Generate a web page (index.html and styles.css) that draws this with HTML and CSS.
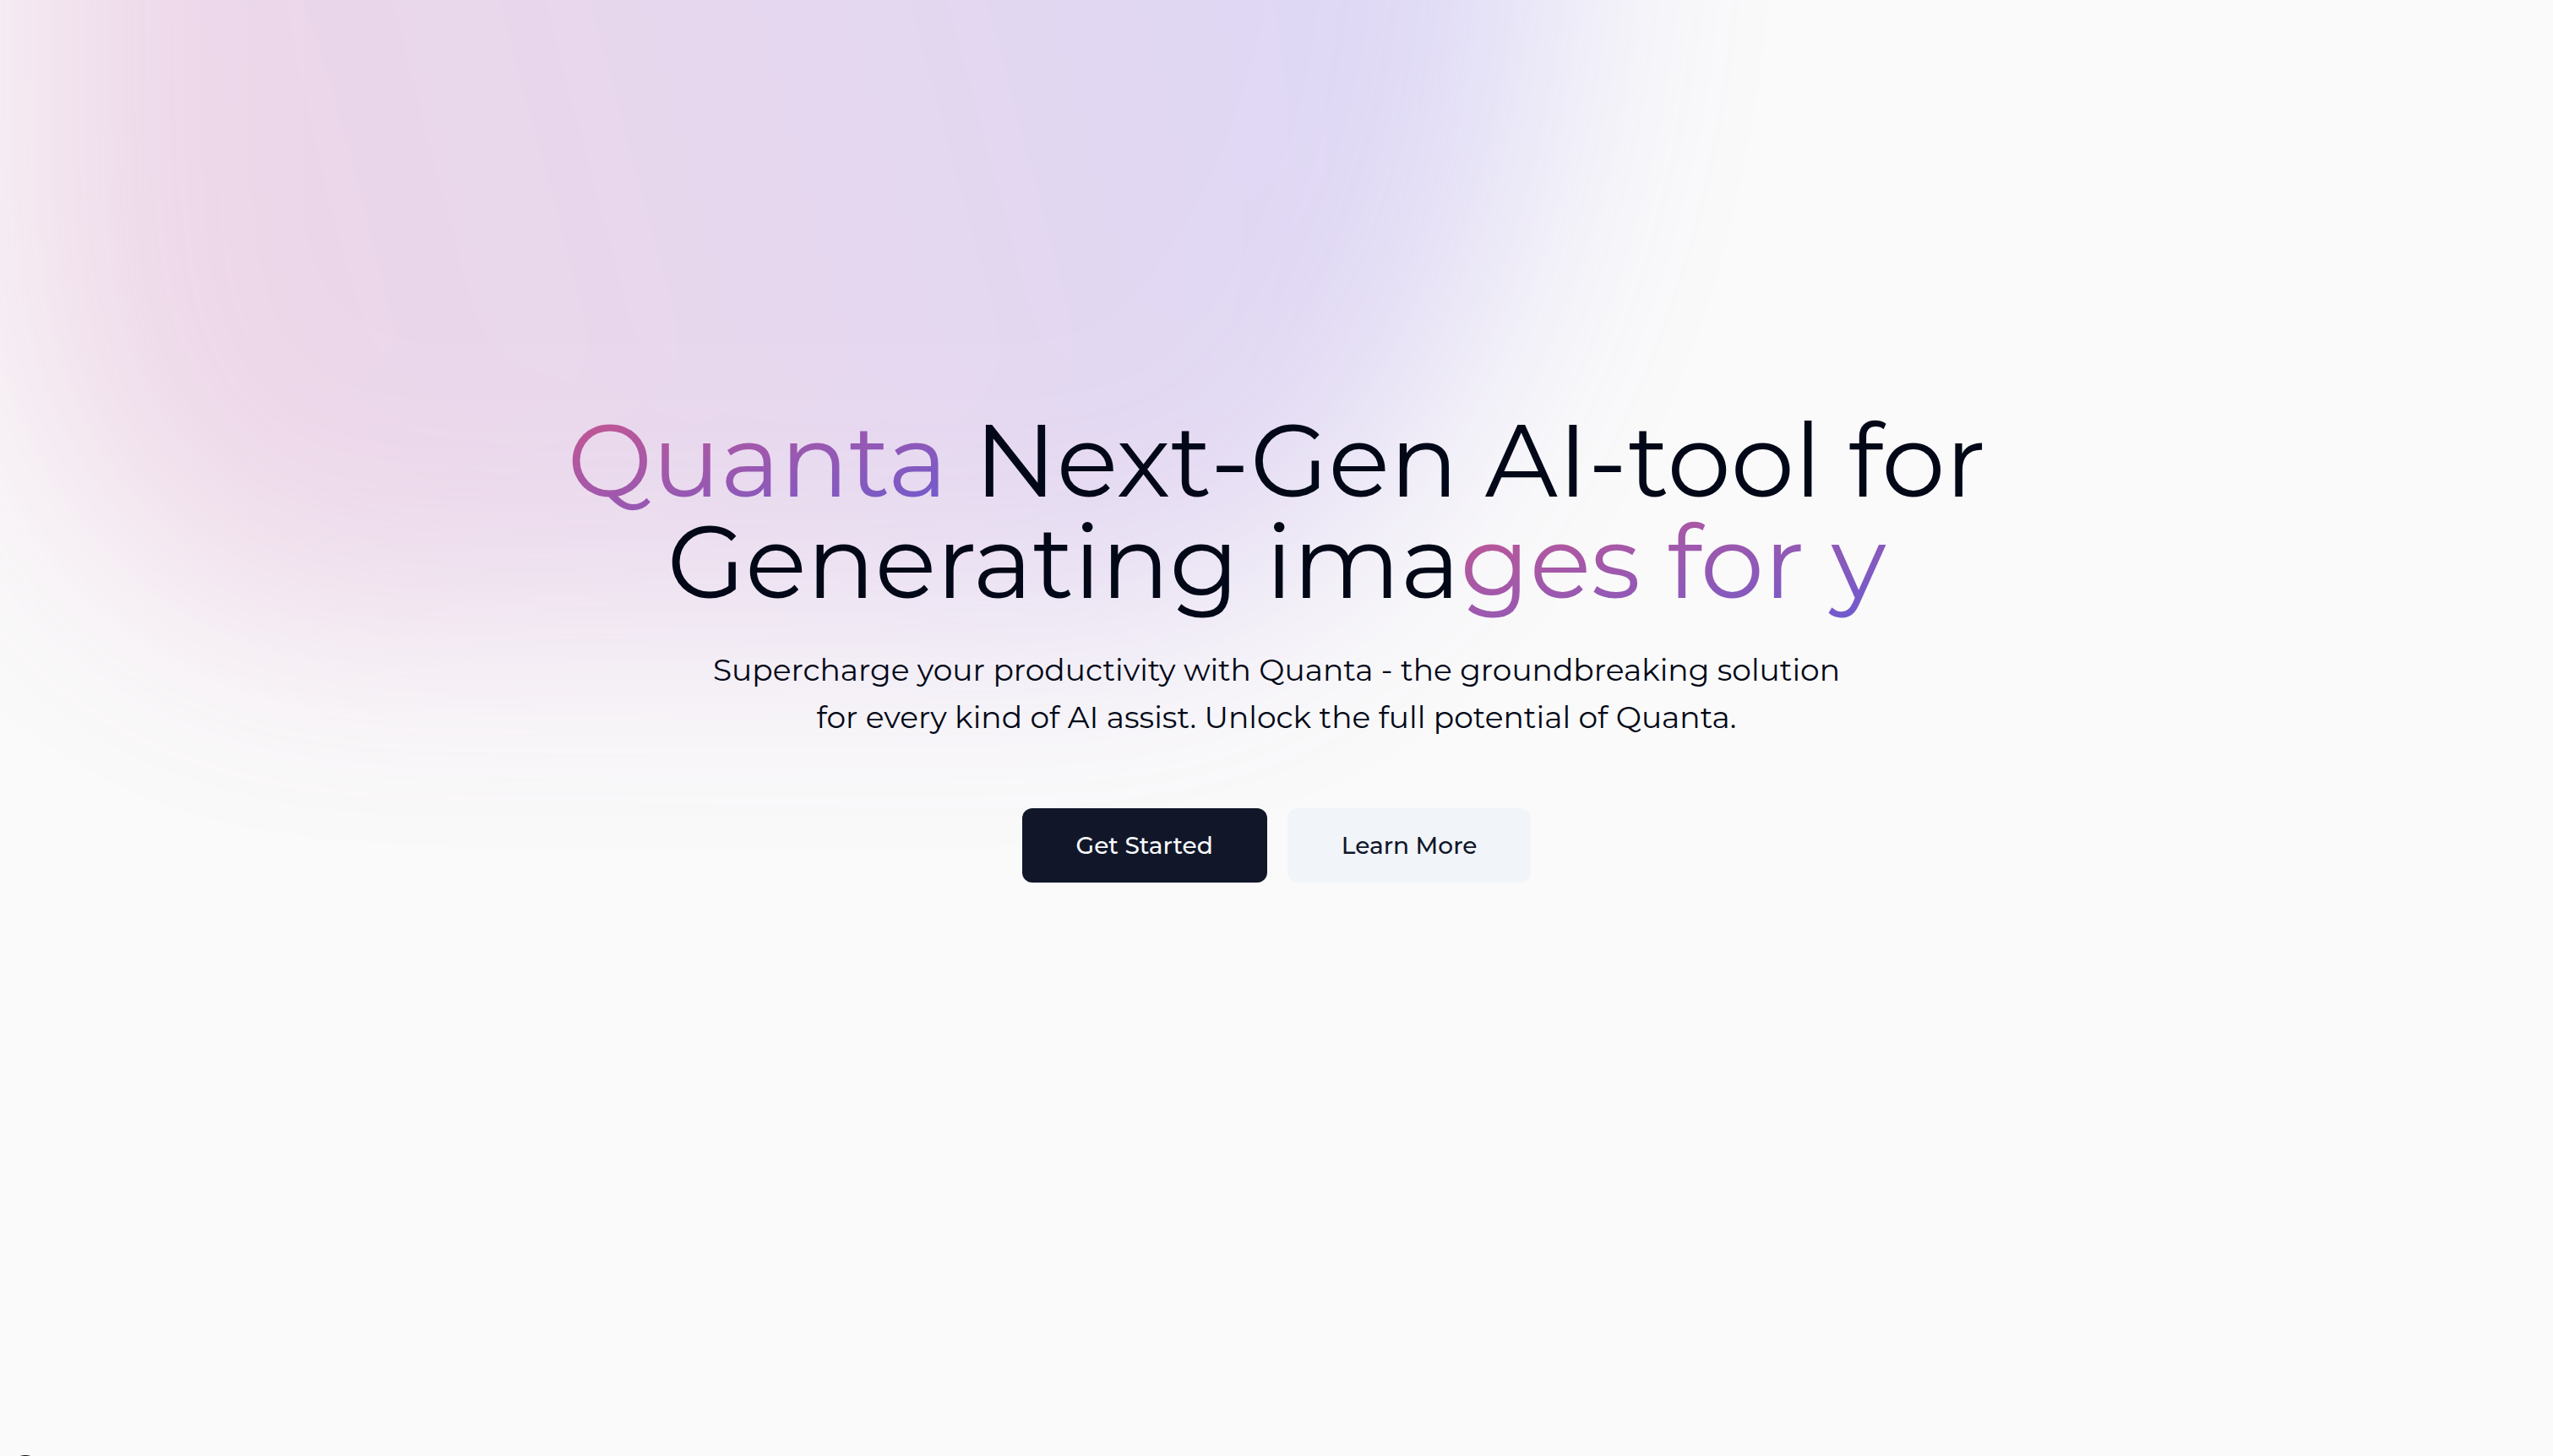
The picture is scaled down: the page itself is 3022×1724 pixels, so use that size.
FILE: index.html
```html
<!DOCTYPE html>
<html lang="en">
<head>
<meta charset="utf-8">
<meta name="viewport" content="width=device-width, initial-scale=1">
<title>Quanta</title>
<link rel="stylesheet" href="styles.css">
</head>
<body>
<main class="hero">
  <div class="glow" aria-hidden="true"></div>
  <h1 class="title"><span class="accent">Quanta</span> Next-Gen AI-tool for Generating ima<span class="accent">ges for y</span></h1>
  <p class="lead">Supercharge your productivity with Quanta - the groundbreaking solution for every kind of AI assist. Unlock the full potential of Quanta.</p>
  <div class="actions">
    <button class="button button-primary" type="button">Get Started</button>
    <button class="button button-secondary" type="button">Learn More</button>
  </div>
  <div class="badge" aria-hidden="true"></div>
</main>
</body>
</html>
```
FILE: styles.css
```css
* {
  box-sizing: border-box;
}

body {
  margin: 0;
  background: #fafafa;
  color: #020817;
  font-family: "Montserrat", "DejaVu Sans", sans-serif;
}

.hero {
  position: relative;
  isolation: isolate;
  display: flex;
  flex-direction: column;
  align-items: center;
  min-height: 100vh;
  padding: 485px 32px 64px;
  overflow: hidden;
  text-align: center;
}

/* Soft colour wash behind the heading */
.glow {
  position: absolute;
  z-index: -1;
  top: -600px;
  left: 1%;
  width: 60%;
  height: 1340px;
  border-radius: 0 0 520px 360px / 0 0 900px 440px;
  background: linear-gradient(75deg, #c84896 0%, #a050be 42%, #6450eb 92%);
  opacity: 0.2;
  filter: blur(136px);
}

.title {
  max-width: 1792px;
  margin: 0;
  font-size: 120px;
  font-weight: 400;
  line-height: 120px;
}

.accent {
  background: linear-gradient(to bottom right, #cc568c, #6a5bd2);
  -webkit-background-clip: text;
  background-clip: text;
  color: transparent;
}

.lead {
  max-width: 1344px;
  margin: 40px 0 0;
  font-size: 36px;
  line-height: 56px;
}

.actions {
  display: flex;
  flex-wrap: wrap;
  justify-content: center;
  gap: 24px;
  margin-top: 80px;
}

.button {
  height: 88px;
  padding: 0 64px;
  border: 0;
  border-radius: 12px;
  font-family: inherit;
  font-size: 28px;
  font-weight: 500;
  line-height: 40px;
  cursor: pointer;
}

.button-primary {
  background: #111729;
  color: #f8fafc;
}

.button-secondary {
  background: #f1f5fa;
  color: #111729;
}

.badge {
  position: absolute;
  bottom: -39px;
  left: 10px;
  width: 40px;
  height: 40px;
  border-radius: 50%;
  background: #020817;
}
```
